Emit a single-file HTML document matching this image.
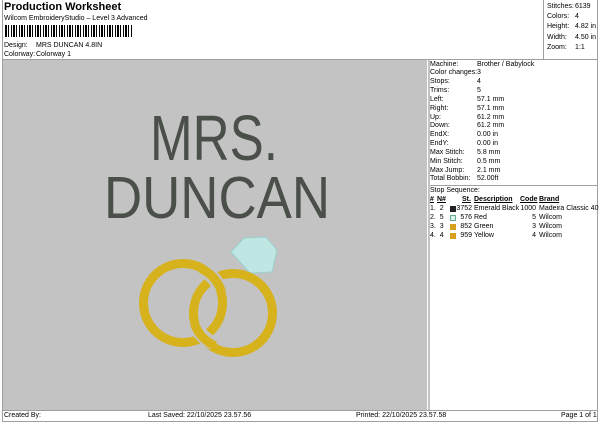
<!DOCTYPE html>
<html><head><meta charset="utf-8"><style>
*{margin:0;padding:0;box-sizing:border-box}
body{width:600px;height:424px;background:#fff;font-family:"Liberation Sans",Arial,sans-serif;color:#000;position:relative;overflow:hidden;font-size:7px}
.a{position:absolute;white-space:nowrap}
.line{position:absolute;background:#a0a0a0}
</style></head><body>
<div class="a" style="left:4px;top:1px;font-size:11px;font-weight:bold">Production Worksheet</div>
<div class="a" style="left:4px;top:15px;font-size:7px">Wilcom EmbroideryStudio – Level 3 Advanced</div>
<div class="a" style="left:5px;top:25px;width:128px;height:12px;background:repeating-linear-gradient(90deg,#000 0 2px,#fff 2px 3px,#000 3px 4px,#fff 4px 6px,#000 6px 7px,#fff 7px 8px)"></div>
<div class="a" style="left:4px;top:42px">Design:</div><div class="a" style="left:36px;top:42px">MRS DUNCAN 4.8IN</div>
<div class="a" style="left:4px;top:51px">Colorway:</div><div class="a" style="left:36px;top:51px">Colorway 1</div>
<div class="line" style="left:2px;top:0;width:1px;height:422px"></div>
<div class="line" style="left:597px;top:0;width:1px;height:422px"></div>
<div class="line" style="left:2px;top:59px;width:596px;height:1px"></div>
<div class="line" style="left:543px;top:0;width:1px;height:60px"></div>
<div class="a" style="left:3px;top:60px;width:424px;height:350px;background:#c3c3c3"></div>
<div class="a" style="left:428px;top:60px;width:2px;height:350px;background:#c3c3c3"></div>
<div class="line" style="left:2px;top:410px;width:596px;height:1px"></div>
<div class="line" style="left:2px;top:421px;width:596px;height:1px"></div>
<div class="line" style="left:430px;top:185px;width:168px;height:1px"></div>
<div class="a" style="left:547px;top:2px;line-height:10.2px">Stitches:<br>Colors:<br>Height:<br>Width:<br>Zoom:</div>
<div class="a" style="left:575px;top:2px;line-height:10.2px">6139<br>4<br>4.82 in<br>4.50 in<br>1:1</div>
<div class="a" style="left:430px;top:60.5px;line-height:8.85px">Machine:<br>Color changes:<br>Stops:<br>Trims:<br>Left:<br>Right:<br>Up:<br>Down:<br>EndX:<br>EndY:<br>Max Stitch:<br>Min Stitch:<br>Max Jump:<br>Total Bobbin:</div>
<div class="a" style="left:477px;top:60.5px;line-height:8.85px">Brother / Babylock<br>3<br>4<br>5<br>57.1 mm<br>57.1 mm<br>61.2 mm<br>61.2 mm<br>0.00 in<br>0.00 in<br>5.8 mm<br>0.5 mm<br>2.1 mm<br>52.00ft</div>
<div class="a" style="left:430px;top:187px">Stop Sequence:</div>
<div class="a" style="left:430px;top:196px;font-weight:bold;text-decoration:underline">#</div>
<div class="a" style="left:437px;top:196px;font-weight:bold;text-decoration:underline">N#</div>
<div class="a" style="left:462px;top:196px;font-weight:bold;text-decoration:underline">St.</div>
<div class="a" style="left:474px;top:196px;font-weight:bold;text-decoration:underline">Description</div>
<div class="a" style="left:520px;top:196px;font-weight:bold;text-decoration:underline">Code</div>
<div class="a" style="left:539px;top:196px;font-weight:bold;text-decoration:underline">Brand</div>
<div class="a" style="left:430px;top:205px;line-height:8.9px">1.&nbsp; 2<br>2.&nbsp; 5<br>3.&nbsp; 3<br>4.&nbsp; 4</div>
<div class="a" style="left:450px;top:206px;width:6px;height:6px;background:#222"></div>
<div class="a" style="left:450px;top:215px;width:6px;height:6px;background:#d8f4f2;border:1px solid #6a8"></div>
<div class="a" style="left:450px;top:224px;width:6px;height:6px;background:#d9a020"></div>
<div class="a" style="left:450px;top:233px;width:6px;height:6px;background:#d9a020"></div>
<div class="a" style="left:455px;top:205px;width:17px;text-align:right;line-height:8.9px">3752<br>576<br>852<br>959</div>
<div class="a" style="left:474px;top:205px;line-height:8.9px">Emerald Black<br>Red<br>Green<br>Yellow</div>
<div class="a" style="left:515px;top:205px;width:21px;text-align:right;line-height:8.9px">1000<br>5<br>3<br>4</div>
<div class="a" style="left:539px;top:205px;line-height:8.9px">Madeira Classic 40<br>Wilcom<br>Wilcom<br>Wilcom</div>
<div class="a" style="left:4px;top:412px">Created By:</div>
<div class="a" style="left:148px;top:412px">Last Saved: 22/10/2025 23.57.56</div>
<div class="a" style="left:356px;top:412px">Printed: 22/10/2025 23.57.58</div>
<div class="a" style="left:561px;top:412px">Page 1 of 1</div>
<svg class="a" style="left:0;top:0" width="600" height="424">
<text x="150" y="160" font-family="Liberation Sans" font-size="64" fill="#4a4f4a" textLength="128" lengthAdjust="spacingAndGlyphs">MRS.</text>
<text x="104" y="218" font-family="Liberation Sans" font-size="59" fill="#4a4f4a" textLength="226" lengthAdjust="spacingAndGlyphs">DUNCAN</text>
<polygon points="231,252 244,238 266,237 277,250 272,272 250,273" fill="#bfe6e2" stroke="#9cd0cc" stroke-width="1"/>
<circle cx="233" cy="313" r="39.5" fill="none" stroke="#d6b21c" stroke-width="9"/>
<circle cx="183" cy="303" r="39.5" fill="none" stroke="#d6b21c" stroke-width="9"/>
<path d="M213.1 343.3 A39.5 39.5 0 0 1 195.1 325.5" fill="none" stroke="#c3c3c3" stroke-width="14"/>
<path d="M215.2 346 A39.5 39.5 0 0 1 194.5 324" fill="none" stroke="#d6b21c" stroke-width="9"/>
<path d="M203 270 A39.5 39.5 0 0 1 220.5 289.5" fill="none" stroke="#c3c3c3" stroke-width="14"/>
<path d="M201 268.5 A39.5 39.5 0 0 1 221.5 291.5" fill="none" stroke="#d6b21c" stroke-width="9"/>
</svg>
</body></html>
